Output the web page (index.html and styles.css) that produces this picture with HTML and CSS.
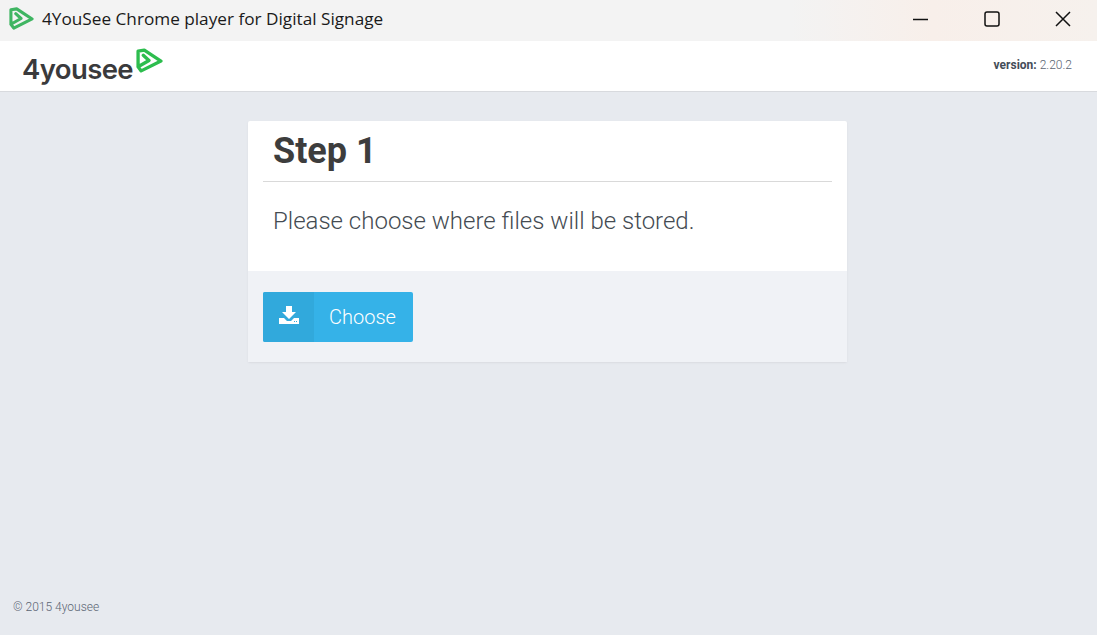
FILE: index.html
```html
<!DOCTYPE html>
<html lang="en">
<head>
   <meta charset="UTF-8">
   <title>4YouSee Chrome player for Digital Signage</title>
   <link rel="stylesheet" href="styles.css">
</head>
<body>
   <div class="titlebar">
       <svg class="app-icon" width="25" height="25" viewBox="0 0 26 24">
           <path class="mark mark-dim" d="M7 7 L12.5 12 L2 18 V3 L8 2 L24 12.5 L5 22 L2 18"/>
       </svg>
       <span class="app-title">4YouSee Chrome player for Digital Signage</span>
       <div class="win-controls">
           <svg width="16" height="16" viewBox="0 0 16 16"><path d="M0 8.5 H15" class="win"/></svg>
           <svg width="16" height="16" viewBox="0 0 16 16"><rect x="1" y="1" width="14" height="14" rx="2" class="win"/></svg>
           <svg width="16" height="16" viewBox="0 0 16 16"><path d="M1 1 L15 15 M15 1 L1 15" class="win"/></svg>
       </div>
   </div>
   <header class="topbar">
       <div class="logo">
           <span class="logo-text">4yousee</span>
           <svg class="logo-mark" width="27" height="25" viewBox="0 0 26 24">
               <path class="mark" d="M7 7 L12.5 12 L2 18 V3 L8 2 L24 12.5 L5 22 L2 18"/>
           </svg>
       </div>
       <div class="version"><b>version:</b> 2.20.2</div>
   </header>
   <main class="content">
       <section class="card">
           <div class="card-body">
               <h1>Step 1</h1>
               <p>Please choose where files will be stored.</p>
           </div>
           <div class="card-footer">
               <button class="btn">
                   <span class="btn-icon">
                       <svg width="20" height="18" viewBox="0 0 20 18">
                           <path fill="#fff" d="M7 0 H13 V6 H17 L10 13 L3 6 H7 Z"/>
                           <path fill="#fff" fill-rule="evenodd" d="M0 12 H5 L8 15 H12 L15 12 H20 V18 H0 Z M15 15 H16 V16 H15 Z M17 15 H18 V16 H17 Z"/>
                       </svg>
                   </span>
                   <span class="btn-label">Choose</span>
               </button>
           </div>
       </section>
   </main>
   <footer class="copy">© 2015 4yousee</footer>
</body>
</html>
```

FILE: styles.css
```css
* {
    box-sizing: border-box;
}
html, body {
    height: 100%;
}
body {
    margin: 0;
    display: flex;
    flex-direction: column;
    background-color: #e7eaef;
    font-family: Roboto, sans-serif;
    color: #3d3d3d;
}
.titlebar {
    height: 41px;
    flex: none;
    display: flex;
    align-items: center;
    padding-left: 9px;
    background: linear-gradient(90deg, #f3f3f3 0%, #f3f3f3 72%, #f8efea 85%, #f6f1ed 100%);
}
.app-icon {
    margin-right: 8px;
    margin-top: -5px;
}
.app-title {
    font-family: "Open Sans", sans-serif;
    font-size: 17.2px;
    color: #1a1a1a;
    margin-top: -4px;
}
.win-controls {
    margin-left: auto;
    display: flex;
    align-items: center;
    gap: 55px;
    padding-right: 26px;
    margin-top: -4px;
}
.win {
    fill: none;
    stroke: #111;
    stroke-width: 1.5;
}
.mark {
    fill: none;
    stroke: #2dbd4e;
    stroke-width: 3.2;
    stroke-linejoin: round;
    stroke-linecap: round;
}
.mark-dim {
    stroke: #3fb562;
}
.topbar {
    height: 51px;
    flex: none;
    display: flex;
    align-items: center;
    justify-content: space-between;
    padding: 0 25px 3px 22px;
    background-color: #fff;
    border-bottom: 1px solid #d8dade;
}
.logo {
    display: flex;
    align-items: flex-start;
}
.logo-text {
    font-family: Inter, sans-serif;
    font-weight: 600;
    font-size: 27.5px;
    letter-spacing: -0.6px;
    color: #3a3a3c;
    margin-top: 9px;
}
.logo-mark {
    margin-left: 3px;
    margin-top: 5px;
}
.version {
    font-size: 12px;
    font-weight: 300;
    color: #5a6472;
}
.version b {
    font-weight: 700;
    color: #444c58;
}
.content {
    flex: 1;
    padding: 29px 2px 0 0;
}
.card {
    width: 599px;
    margin: 0 auto;
    background-color: #fff;
    border-radius: 2px;
    box-shadow: 0 1px 2px #d9dbe0;
}
.card-body {
    padding: 0 15px;
    height: 150px;
}
h1 {
    margin: 0;
    height: 61px;
    padding: 6px 10px 0;
    border-bottom: 1px solid #d9d9d9;
    font-size: 36px;
    line-height: 48px;
    font-weight: 700;
    color: #3d3d3d;
}
.card-body p {
    margin: 0;
    padding: 23px 10px 0;
    font-size: 24px;
    line-height: 32px;
    font-weight: 300;
    color: #444b52;
}
.card-footer {
    height: 91px;
    padding: 21px 15px;
    background-color: #f0f2f6;
}
.btn {
    display: flex;
    width: 150px;
    height: 50px;
    padding: 0;
    border: 0;
    border-radius: 2px;
    overflow: hidden;
    background-color: #35b2e8;
    color: #fff;
    font-family: Roboto, sans-serif;
}
.btn-icon {
    width: 51px;
    height: 100%;
    display: flex;
    align-items: center;
    justify-content: center;
    padding-bottom: 4px;
    background-color: #31a9dc;
}
.btn-label {
    flex: 1;
    padding-right: 2px;
    font-size: 20px;
    font-weight: 300;
    line-height: 50px;
}
.copy {
    flex: none;
    padding: 0 13px 20px;
    font-size: 12px;
    font-weight: 300;
    line-height: 16px;
    color: #5a6472;
}
```
